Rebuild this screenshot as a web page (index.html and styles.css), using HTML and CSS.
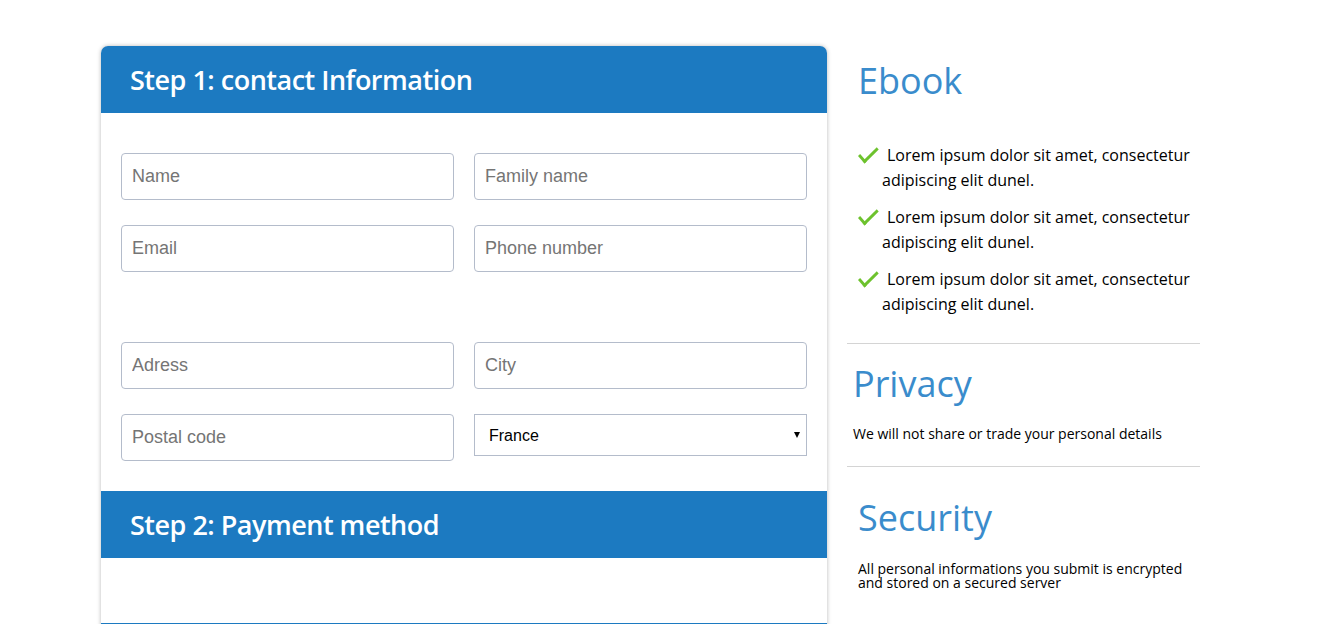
FILE: index.html
```html
<!DOCTYPE html>
<html lang="en">
<head>
<meta charset="utf-8">
<title>Checkout</title>
<link rel="stylesheet" href="styles.css">
</head>
<body>
<div class="page">
  <div class="card">
    <div class="step-head"><h2>Step 1: contact Information</h2></div>
    <div class="step-body">
      <div class="grid">
        <input class="field" type="text" placeholder="Name">
        <input class="field" type="text" placeholder="Family name">
        <input class="field" type="text" placeholder="Email">
        <input class="field" type="text" placeholder="Phone number">
      </div>
      <div class="grid grid-second">
        <input class="field" type="text" placeholder="Adress">
        <input class="field" type="text" placeholder="City">
        <input class="field" type="text" placeholder="Postal code">
        <div class="select-wrap">
          <select class="select">
            <option>France</option>
            <option>Germany</option>
            <option>Spain</option>
          </select>
        </div>
      </div>
    </div>
    <div class="step-head"><h2>Step 2: Payment method</h2></div>
    <div class="step-body step-empty"></div>
    <div class="step-head"></div>
  </div>
  <aside class="side">
    <section class="ebook">
      <h3 class="side-title">Ebook</h3>
      <ul class="checks">
        <li>Lorem ipsum dolor sit amet, consectetur adipiscing elit dunel.</li>
        <li>Lorem ipsum dolor sit amet, consectetur adipiscing elit dunel.</li>
        <li>Lorem ipsum dolor sit amet, consectetur adipiscing elit dunel.</li>
      </ul>
    </section>
    <section class="privacy">
      <h3 class="side-title">Privacy</h3>
      <p class="side-text">We will not share or trade your personal details</p>
    </section>
    <section class="security">
      <h3 class="side-title">Security</h3>
      <p class="side-text tight">All personal informations you submit is encrypted and stored on a secured server</p>
    </section>
  </aside>
</div>
</body>
</html>
```
FILE: styles.css
```css
* { box-sizing: border-box; }
html, body { margin: 0; padding: 0; background: #fff; }
body { font-family: "Open Sans", "Liberation Sans", sans-serif; color: #000; }

.page {
  display: flex;
  align-items: flex-start;
  padding: 46px 0 0 101px;
  gap: 20px;
  height: 624px;
  overflow: hidden;
}

.card {
  width: 726px;
  flex: none;
  background: #fff;
  border-radius: 7px 7px 0 0;
  box-shadow: 0 0 4px rgba(0,0,0,0.28);
  overflow: hidden;
}

.step-head {
  background: #1c7ac1;
  height: 67px;
  display: flex;
  align-items: center;
  padding-left: 29px;
}
.step-head h2 {
  margin: 0;
  color: #fff;
  font-family: "Open Sans", sans-serif;
  font-weight: 600;
  font-size: 27px;
  letter-spacing: -0.5px;
}

.step-body { padding: 40px 20px 30px; }
.step-empty { height: 65px; padding: 0; }

.grid {
  display: grid;
  grid-template-columns: 1fr 1fr;
  column-gap: 20px;
  row-gap: 25px;
  align-items: start;
}
.grid-second { margin-top: 70px; }

.field {
  height: 47px;
  width: 100%;
  border: 1px solid #b4bccb;
  border-radius: 4px;
  padding: 0 10px;
  font-family: "Liberation Sans", Arial, sans-serif;
  font-size: 18px;
  color: #333;
  background: #fff;
  outline: none;
}
.field::placeholder { color: #757575; }

.select-wrap { position: relative; }
.select {
  display: block;
  width: 100%;
  height: 42px;
  border: 1px solid #b4bccb;
  border-radius: 0;
  padding: 0 14px;
  font-family: "Liberation Sans", Arial, sans-serif;
  font-size: 16px;
  color: #000;
  background: #fff;
  -webkit-appearance: none;
  appearance: none;
  outline: none;
}
.select-wrap::after {
  content: "";
  position: absolute;
  right: 7px;
  top: 18px;
  border-left: 3.5px solid transparent;
  border-right: 3.5px solid transparent;
  border-top: 6px solid #000;
  pointer-events: none;
}

.side {
  width: 353px;
  flex: none;
}
.side-title {
  margin: 0;
  font-family: "Open Sans", sans-serif;
  font-weight: 400;
  font-size: 36px;
  line-height: 1.2;
  color: #3a8ccc;
}
.ebook .side-title { margin-top: 13px; padding-left: 11px; }

.checks {
  list-style: none;
  margin: 41px 0 0;
  padding: 0 0 0 11px;
}
.checks li {
  position: relative;
  padding-left: 24px;
  text-indent: 5px;
  font-size: 16px;
  line-height: 25px;
  margin-bottom: 12px;
}
.checks li:last-child { margin-bottom: 0; }
.checks li::before {
  content: "";
  position: absolute;
  border-left: 3px solid #6dc22d;
  border-bottom: 3px solid #6dc22d;
  transform: rotate(-45deg) skewX(-4deg);
  transform-origin: left top;
  left: 0;
  top: 13px;
  width: 17px;
  height: 7px;
}

.privacy {
  margin-top: 26px;
  border-top: 1px solid #d4d4d4;
  border-bottom: 1px solid #d4d4d4;
  padding: 18px 0 23px 6px;
}
.side-text {
  margin: 0;
  font-size: 14px;
  line-height: 18px;
}
.privacy .side-text { margin-top: 20px; }
.security { padding: 29px 0 0 11px; }
.security .side-text { margin-top: 22px; line-height: 14px; }
```
